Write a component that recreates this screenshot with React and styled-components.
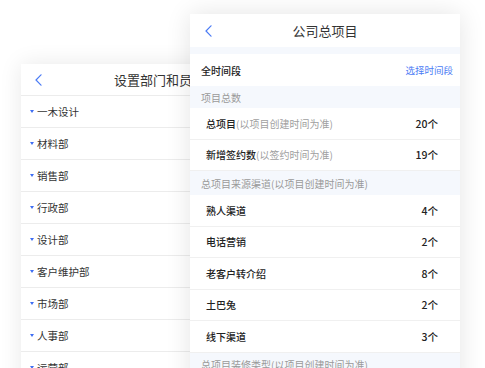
import React from 'react';
import styled, { createGlobalStyle } from 'styled-components';

const GlobalStyle = createGlobalStyle`
  html, body {
    margin: 0;
    padding: 0;
    background: #ffffff;
    overflow: hidden;
  }
  body {
    font-family: "Noto Sans CJK SC", "Noto Sans", sans-serif;
  }
`;

const departments = ['一木设计', '材料部', '销售部', '行政部', '设计部', '客户维护部', '市场部', '人事部', '运营部'];

const sections = [
  {
    title: '项目总数',
    height: 22,
    rows: [
      { label: '总项目', note: '(以项目创建时间为准)', value: '20个' },
      { label: '新增签约数', note: '(以签约时间为准)', value: '19个' },
    ],
  },
  {
    title: '总项目来源渠道(以项目创建时间为准)',
    height: 24,
    rows: [
      { label: '熟人渠道', value: '4个' },
      { label: '电话营销', value: '2个' },
      { label: '老客户转介绍', value: '8个' },
      { label: '土巴兔', value: '2个' },
      { label: '线下渠道', value: '3个' },
    ],
  },
  {
    title: '总项目装修类型(以项目创建时间为准)',
    height: 24,
    rows: [],
  },
];

const Back = () => (
  <svg width="7" height="12" viewBox="0 0 7 12">
    <polyline points="6,0.8 1,6 6,11.2" fill="none" stroke="#4b7bf5" strokeWidth="1.2" strokeLinecap="round" strokeLinejoin="round" />
  </svg>
);

const App = () => (
  <>
    <GlobalStyle />
    <Stage>
      <DeptScreen>
        <Header>
          <BackBtn><Back /></BackBtn>
          <Title>设置部门和员工</Title>
        </Header>
        {departments.map((d) => (
          <DeptRow key={d}>
            <Caret />
            {d}
          </DeptRow>
        ))}
      </DeptScreen>

      <StatsScreen>
        <Header $h={33} $border={false}>
          <BackBtn $left={15}><Back /></BackBtn>
          <Title>公司总项目</Title>
        </Header>
        <Gap />
        <RangeRow>
          <span>全时间段</span>
          <Link>选择时间段</Link>
        </RangeRow>
        {sections.map((s) => (
          <React.Fragment key={s.title}>
            <SectionHead $h={s.height}>{s.title}</SectionHead>
            {s.rows.map((r) => (
              <StatRow key={r.label}>
                <Label>
                  {r.label}
                  {r.note && <Note>{r.note}</Note>}
                </Label>
                <Value>{r.value}</Value>
              </StatRow>
            ))}
          </React.Fragment>
        ))}
      </StatsScreen>
    </Stage>
  </>
);

const Stage = styled.div`
  position: relative;
  width: 485px;
  height: 368px;
  overflow: hidden;
  background: #ffffff;
`;

const Screen = styled.div`
  position: absolute;
  background: #ffffff;
  display: flex;
  flex-direction: column;
`;

const DeptScreen = styled(Screen)`
  left: 21px;
  top: 64px;
  width: 277px;
  height: 340px;
  box-shadow: 0 0 22px rgba(0, 0, 0, 0.09);
`;

const StatsScreen = styled(Screen)`
  left: 190px;
  top: 14px;
  width: 270px;
  height: 380px;
  box-shadow: 0 0 24px rgba(0, 0, 0, 0.11);
`;

const Header = styled.div`
  position: relative;
  flex: none;
  height: ${(p) => p.$h || 31}px;
  display: flex;
  align-items: center;
  justify-content: center;
  border-bottom: ${(p) => (p.$border === false ? 'none' : '1px solid #ececec')};
`;

const BackBtn = styled.div`
  position: absolute;
  left: ${(p) => p.$left || 14}px;
  top: 50%;
  transform: translateY(-50%);
  display: flex;
`;

const Title = styled.div`
  font-size: 13px;
  color: #333333;
`;

const DeptRow = styled.div`
  flex: none;
  height: 31px;
  display: flex;
  align-items: center;
  padding-left: 9px;
  font-size: 10.5px;
  color: #333333;
  border-bottom: 1px solid #ececec;
`;

const Caret = styled.span`
  width: 0;
  height: 0;
  margin-right: 3px;
  border-left: 2px solid transparent;
  border-right: 2px solid transparent;
  border-top: 3px solid #3f6ef3;
`;

const Gap = styled.div`
  flex: none;
  height: 7px;
  background: #f5f8fd;
`;

const RangeRow = styled.div`
  flex: none;
  height: 32px;
  display: flex;
  align-items: center;
  justify-content: space-between;
  padding: 0 7px 0 11px;
  font-size: 10px;
  font-weight: 500;
  color: #222222;
`;

const Link = styled.span`
  font-size: 9.5px;
  font-weight: 400;
  color: #4b7bf5;
`;

const SectionHead = styled.div`
  flex: none;
  height: ${(p) => p.$h}px;
  display: flex;
  align-items: center;
  padding-left: 11px;
  font-size: 10px;
  color: #9a9a9a;
  background: #f5f8fd;
`;

const StatRow = styled.div`
  flex: none;
  height: 31.5px;
  box-sizing: border-box;
  display: flex;
  align-items: center;
  justify-content: space-between;
  padding: 0 22px 0 16px;
  border-bottom: 1px solid #f0f0f0;
  &:last-of-type { border-bottom: none; }
`;

const Label = styled.div`
  font-size: 10px;
  font-weight: 500;
  color: #222222;
`;

const Note = styled.span`
  font-weight: 400;
  color: #a0a0a0;
`;

const Value = styled.div`
  font-size: 10.5px;
  font-weight: 500;
  color: #222222;
`;

export default App;
